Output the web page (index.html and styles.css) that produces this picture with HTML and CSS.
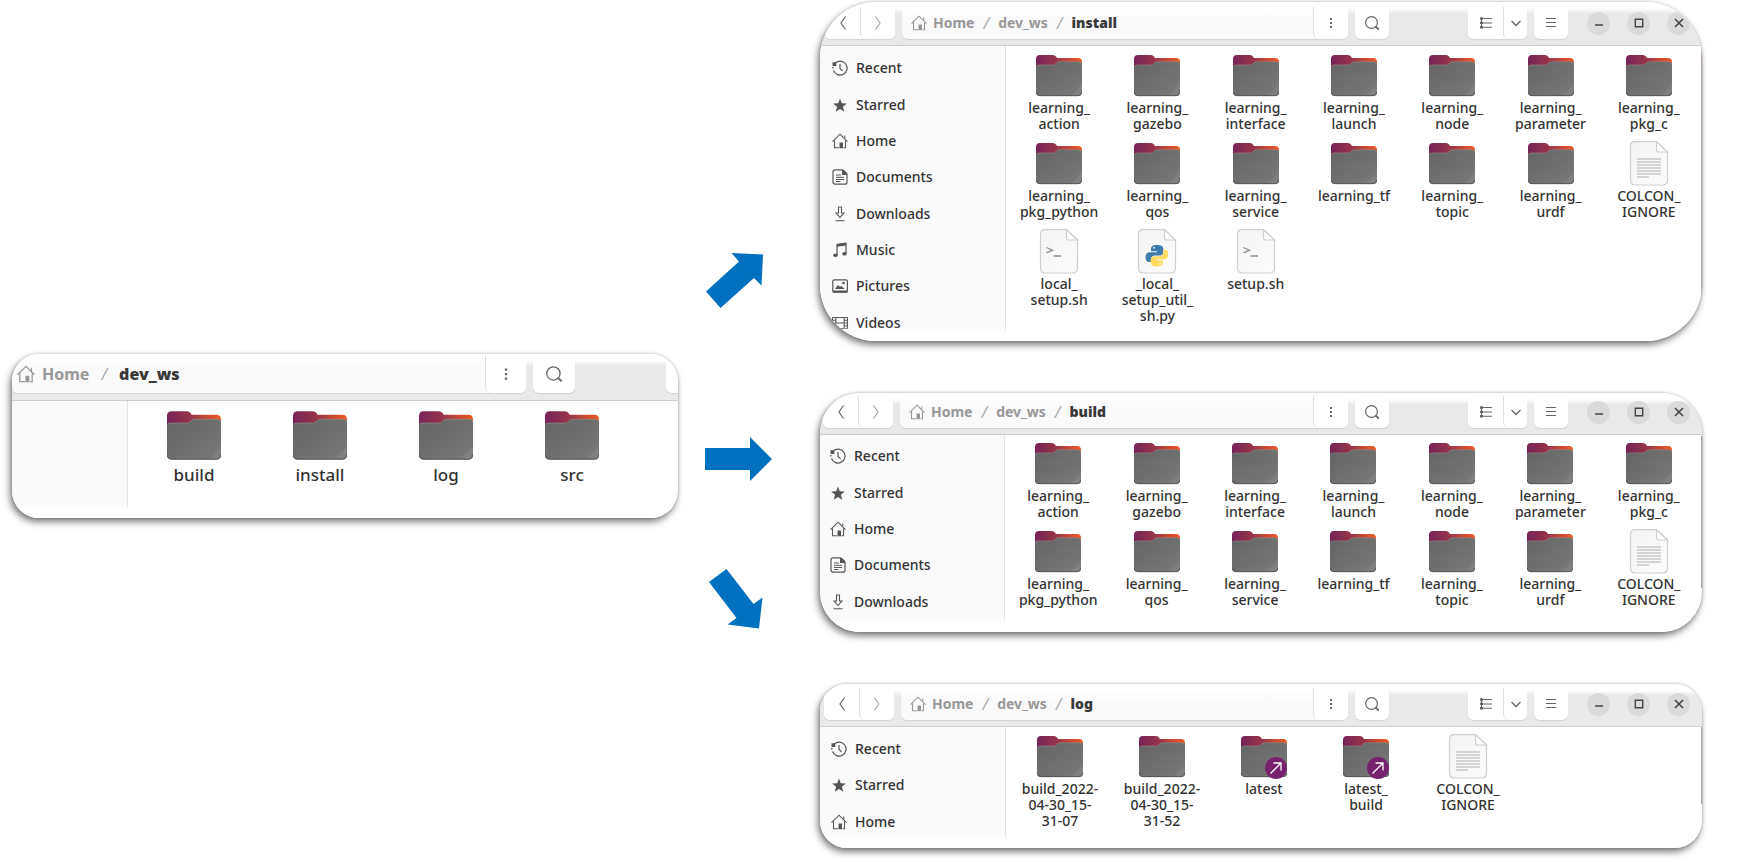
FILE: index.html
```html
<!DOCTYPE html>
<html lang="en">
<head>
<meta charset="utf-8">
<title>dev_ws workspace folders</title>
<link rel="stylesheet" href="styles.css">
</head>
<body>
<svg class="sprite" aria-hidden="true">
  <defs>
    <linearGradient id="tab" x1="0" y1="0" x2="1" y2="0"><stop offset="0" stop-color="#762358"/><stop offset=".45" stop-color="#97354a"/><stop offset=".75" stop-color="#cc4a35"/><stop offset="1" stop-color="#ee5a26"/></linearGradient>
    <linearGradient id="front" x1="0" y1="0" x2="1" y2="1"><stop offset="0" stop-color="#646464"/><stop offset="1" stop-color="#7a7a7a"/></linearGradient>
    <linearGradient id="paper" x1="0" y1="0" x2="1" y2="1"><stop offset="0" stop-color="#f4f4f4"/><stop offset="1" stop-color="#fcfcfc"/></linearGradient>
  </defs>
  <symbol id="folder" viewBox="0 0 46 46">
    <path d="M0 15V6q0-4 4-4h13q2 0 3 1.500l1 1.500h21q4 0 4 4v6z" fill="url(#tab)"/>
    <path d="M0 15q0-3 3-3h14q1.500 0 2.500-1l1.500-1.300q1-.9 2.500-.9H43q3 0 3 3V39q0 4-4 4H4q-4 0-4-4z" fill="url(#front)"/>
    <path d="M46 31v8q0 4-4 4h-7z" fill="#888" opacity=".5"/>
    <path d="M0 14q0-2 3-2h14q1.500 0 2.500-1l1.500-1.300q1-.9 2.500-.9H43q3 0 3 3" fill="none" stroke="#8d8582" stroke-width=".7"/>
    <path d="M.3 39q0 3.700 3.700 3.700h38q3.700 0 3.700-3.700" fill="none" stroke="#4e4e4e" stroke-width=".8"/>
  </symbol>
  <symbol id="page" viewBox="0 0 46 46">
    <path d="M9 .7h21.500L41.500 11v28q0 5-5 5h-27q-5 0-5-5V5.500Q4.500.7 9 .7z" fill="url(#paper)" stroke="#cfcfcf" stroke-width="1.200"/>
    <path d="M30.500.7v7.800q0 2.500 2.500 2.500h8.500z" fill="#fff" stroke="#cfcfcf" stroke-width="1.200"/>
  </symbol>
  <symbol id="text" viewBox="0 0 46 46">
    <use href="#page"/>
    <path d="M11 18h24M11 21h24M11 24h24M11 27h24M11 30h24M11 33h24M11 36h12" stroke="#b0b0b0" stroke-width="1.100"/>
  </symbol>
  <symbol id="shell" viewBox="0 0 46 46">
    <use href="#page"/>
    <path d="M10.500 18.500l6 2.700-6 2.700M17.500 27h7.500" fill="none" stroke="#8f8f8f" stroke-width="1.300"/>
  </symbol>
  <symbol id="python" viewBox="0 0 46 46">
    <use href="#page"/>
    <path d="M22.700 16c-4 0-5.700 1.400-5.700 3.700v2.500h6v1H15.500c-2.600 0-4 2.200-4 5.100s1.400 4.700 3.500 4.700h2v-2.700c0-2.300 1.700-3.800 4-3.800h5c2 0 3.300-1.400 3.300-3.300v-3.500c0-2.200-2-3.700-6.600-3.700z" fill="#3f7cad"/>
    <path d="M23.200 37.500c4 0 5.700-1.400 5.700-3.700v-2.500h-6v-1h7.500c2.600 0 3.900-2.200 3.900-5s-1.300-4.500-3.400-4.500h-1.600v2.500c0 2.400-1.600 3.900-4 3.900h-5c-2 0-3.600 1.400-3.600 3.200v3.400c0 2.200 2 3.700 6.500 3.700z" fill="#ffdc61"/>
    <circle cx="20" cy="18.800" r="1" fill="#dce9f3"/><circle cx="26" cy="34.700" r="1" fill="#fff8d8"/>
  </symbol>
  <symbol id="link" viewBox="0 0 46 46">
    <use href="#folder"/>
    <circle cx="35" cy="34" r="11" fill="#77216f"/>
    <path d="M29.500 39.500L40 29M32.500 29H40v7.500" fill="none" stroke="#fff" stroke-width="1.300"/>
  </symbol>
  <symbol id="recent" viewBox="0 0 16 16">
    <path d="M3.300 2.900A7 7 0 1 1 1.500 10.500" fill="none" stroke="currentColor" stroke-width="1.200"/>
    <path d="M.5 2.200h3.800v3.700H.5z" fill="currentColor"/><path d="M.8 7v1.500" stroke="currentColor" stroke-width="1.300"/>
    <path d="M8 4v4.500l2.500 2.300" fill="none" stroke="currentColor" stroke-width="1.200"/>
  </symbol>
  <symbol id="star" viewBox="0 0 16 16"><path d="M8 1.500l1.800 4.700 5 .3-3.900 3.200 1.400 5L8 12l-4.300 2.700 1.400-5-3.900-3.200 5-.3z" fill="currentColor"/></symbol>
  <symbol id="home" viewBox="0 0 16 16">
    <path d="M.5 8.700L8 1.200l7.500 7.500M2.500 7.500v7.300H7M13.500 7.500v7.300h-2" fill="none" stroke="currentColor" stroke-width="1.100"/>
    <path d="M7.500 9.500H11v5.800H7.500z" fill="currentColor"/><path d="M12.800 2.500v3" stroke="currentColor" stroke-width="1"/>
  </symbol>
  <symbol id="document" viewBox="0 0 16 16">
    <path d="M3 .8h7.500L15 5v8.200q0 2-2 2H3q-2 0-2-2V2.800q0-2 2-2z" fill="none" stroke="currentColor" stroke-width="1.200"/>
    <path d="M10 1h2l3 3v2h-5z" fill="currentColor"/><path d="M4 6h5M4 8.300h8M4 10.500h8M4 12.500h4.500" stroke="currentColor" stroke-width="1"/>
  </symbol>
  <symbol id="download" viewBox="0 0 16 16"><path d="M6.500 1h3v6H12l-4 4.500L4 7h2.500zM3.500 14.700h9" fill="none" stroke="currentColor" stroke-width="1.100"/></symbol>
  <symbol id="music" viewBox="0 0 16 16">
    <path d="M5 13V2.500l9-1.300v10.300" fill="none" stroke="currentColor" stroke-width="1.200"/><path d="M5 2l9-1.300v2.800L5 4.800z" fill="currentColor"/>
    <ellipse cx="3.500" cy="13.200" rx="2.300" ry="1.800" fill="currentColor"/><ellipse cx="12.500" cy="11.700" rx="2.300" ry="1.800" fill="currentColor"/>
  </symbol>
  <symbol id="picture" viewBox="0 0 16 16">
    <rect x=".8" y="1.800" width="14.600" height="12.400" rx="1.500" fill="none" stroke="currentColor" stroke-width="1.200"/><path d="M.8 13.500h14.600" stroke="currentColor" stroke-width="1.800"/>
    <path d="M3 11l3-4 2 2 1.300-1.300L12.500 11z" fill="currentColor"/><circle cx="11.500" cy="5" r="1.300" fill="currentColor"/>
  </symbol>
  <symbol id="video" viewBox="0 0 16 16">
    <path d="M3.800 2v12M12.200 2v12M15.400 2v12M.6 2v12M3.500 2.500h9M3.500 8h9M3.500 13.500h9" stroke="currentColor" stroke-width="1.100"/>
    <path d="M.6 2.500h3.200M.6 5.300h3.200M.6 8h3.200M.6 10.800h3.200M.6 13.500h3.200M12.200 2.500h3.200M12.200 5.300h3.200M12.200 8h3.200M12.200 10.800h3.200M12.200 13.500h3.200" stroke="currentColor" stroke-width=".9"/>
  </symbol>
  <symbol id="back" viewBox="0 0 16 16"><path d="M10.500 1.500L6 8l4.500 6.500" fill="none" stroke="currentColor" stroke-width="1.200"/></symbol>
  <symbol id="next" viewBox="0 0 16 16"><path d="M5.500 1.500L10 8l-4.500 6.500" fill="none" stroke="currentColor" stroke-width="1.200"/></symbol>
  <symbol id="dots" viewBox="0 0 16 16"><path d="M7 3h2v2H7zM7 7h2v2H7zM7 11h2v2H7z" fill="currentColor"/></symbol>
  <symbol id="search" viewBox="0 0 16 16"><circle cx="7.500" cy="7.500" r="5.900" fill="none" stroke="currentColor" stroke-width="1.200"/><path d="M11.500 11.500l3.300 3" stroke="currentColor" stroke-width="1.700"/></symbol>
  <symbol id="list" viewBox="0 0 16 16"><path d="M2 2.500h3v2.300H2zM2 6.800h3v2.300H2zM2 11.100h3v2.300H2z" fill="currentColor"/><path d="M3.500 2v11M5 3.500h9M5 8h9M5 12.300h9" stroke="currentColor" stroke-width="1.100"/></symbol>
  <symbol id="chevron" viewBox="0 0 16 16"><path d="M3.500 6L8 10.500 12.500 6" fill="none" stroke="currentColor" stroke-width="1.300"/></symbol>
  <symbol id="menu" viewBox="0 0 16 16"><path d="M3 3.500h10M3 7.500h10M3 11.500h10" stroke="currentColor" stroke-width="1.100"/></symbol>
  <symbol id="minimize" viewBox="0 0 16 16"><path d="M4 10h8" stroke="currentColor" stroke-width="1.300"/></symbol>
  <symbol id="maximize" viewBox="0 0 16 16"><path d="M4.300 4.300h7.400v7.400H4.300z" fill="none" stroke="currentColor" stroke-width="1.400"/></symbol>
  <symbol id="close" viewBox="0 0 16 16"><path d="M4 4l8 8M12 4l-8 8" stroke="currentColor" stroke-width="1.600"/></symbol>
</svg>

<main class="diagram">
  <section class="window window-source">
    <header class="bar">
      <div class="group path">
        <nav class="crumbs"><a href="#"><svg><use href="#home"/></svg>Home</a><i>/</i><b>dev_ws</b></nav>
        <button aria-label="Options"><svg><use href="#dots"/></svg></button>
      </div>
      <button class="solo" aria-label="Search"><svg><use href="#search"/></svg></button>
      <span class="space"></span>
      <button class="solo cut" aria-label="View"></button>
    </header>
    <div class="body">
      <aside class="places"></aside>
      <ul class="files">
        <li><svg><use href="#folder"/></svg>build</li>
        <li><svg><use href="#folder"/></svg>install</li>
        <li><svg><use href="#folder"/></svg>log</li>
        <li><svg><use href="#folder"/></svg>src</li>
      </ul>
    </div>
  </section>

  <div class="arrows" aria-hidden="true">
    <svg class="arrow-up" viewBox="705 253 68 56"><path d="M706 291.500L739 261.500 731.500 253 763 254.500 761.500 285.500 754 278 720.500 308z"/></svg>
    <svg class="arrow-mid" viewBox="705 437 68 44"><path d="M705 448h45v-11l22 22-22 22v-11h-45z"/></svg>
    <svg class="arrow-down" viewBox="705 569 68 60"><path d="M709 582l17.500-13 27 35 9-6.500-3.500 31-31.500-4 9-6.500z"/></svg>
  </div>

  <div class="results">
    <section class="window window-install">
      <header class="bar">
        <div class="group"><button aria-label="Back"><svg><use href="#back"/></svg></button><button class="faint" aria-label="Forward"><svg><use href="#next"/></svg></button></div>
        <div class="group path">
          <nav class="crumbs"><a href="#"><svg><use href="#home"/></svg>Home</a><i>/</i><a href="#">dev_ws</a><i>/</i><b>install</b></nav>
          <button aria-label="Options"><svg><use href="#dots"/></svg></button>
        </div>
        <button class="solo" aria-label="Search"><svg><use href="#search"/></svg></button>
        <span class="space"></span>
        <div class="group"><button aria-label="List view"><svg><use href="#list"/></svg></button><button class="narrow" aria-label="View options"><svg><use href="#chevron"/></svg></button></div>
        <button class="solo" aria-label="Menu"><svg><use href="#menu"/></svg></button>
        <div class="controls"><button aria-label="Minimize"><svg><use href="#minimize"/></svg></button><button aria-label="Maximize"><svg><use href="#maximize"/></svg></button><button aria-label="Close"><svg><use href="#close"/></svg></button></div>
      </header>
      <div class="body">
        <aside class="places">
          <a href="#"><svg><use href="#recent"/></svg>Recent</a>
          <a href="#"><svg><use href="#star"/></svg>Starred</a>
          <a href="#"><svg><use href="#home"/></svg>Home</a>
          <a href="#"><svg><use href="#document"/></svg>Documents</a>
          <a href="#"><svg><use href="#download"/></svg>Downloads</a>
          <a href="#"><svg><use href="#music"/></svg>Music</a>
          <a href="#"><svg><use href="#picture"/></svg>Pictures</a>
          <a href="#"><svg><use href="#video"/></svg>Videos</a>
        </aside>
        <ul class="files">
          <li><svg><use href="#folder"/></svg>learning_<br>action</li>
          <li><svg><use href="#folder"/></svg>learning_<br>gazebo</li>
          <li><svg><use href="#folder"/></svg>learning_<br>interface</li>
          <li><svg><use href="#folder"/></svg>learning_<br>launch</li>
          <li><svg><use href="#folder"/></svg>learning_<br>node</li>
          <li><svg><use href="#folder"/></svg>learning_<br>parameter</li>
          <li><svg><use href="#folder"/></svg>learning_<br>pkg_c</li>
          <li><svg><use href="#folder"/></svg>learning_<br>pkg_python</li>
          <li><svg><use href="#folder"/></svg>learning_<br>qos</li>
          <li><svg><use href="#folder"/></svg>learning_<br>service</li>
          <li><svg><use href="#folder"/></svg>learning_tf</li>
          <li><svg><use href="#folder"/></svg>learning_<br>topic</li>
          <li><svg><use href="#folder"/></svg>learning_<br>urdf</li>
          <li><svg><use href="#text"/></svg>COLCON_<br>IGNORE</li>
          <li><svg><use href="#shell"/></svg>local_<br>setup.sh</li>
          <li><svg><use href="#python"/></svg>_local_<br>setup_util_<br>sh.py</li>
          <li><svg><use href="#shell"/></svg>setup.sh</li>
        </ul>
      </div>
    </section>

    <section class="window window-build">
      <header class="bar">
        <div class="group"><button aria-label="Back"><svg><use href="#back"/></svg></button><button class="faint" aria-label="Forward"><svg><use href="#next"/></svg></button></div>
        <div class="group path">
          <nav class="crumbs"><a href="#"><svg><use href="#home"/></svg>Home</a><i>/</i><a href="#">dev_ws</a><i>/</i><b>build</b></nav>
          <button aria-label="Options"><svg><use href="#dots"/></svg></button>
        </div>
        <button class="solo" aria-label="Search"><svg><use href="#search"/></svg></button>
        <span class="space"></span>
        <div class="group"><button aria-label="List view"><svg><use href="#list"/></svg></button><button class="narrow" aria-label="View options"><svg><use href="#chevron"/></svg></button></div>
        <button class="solo" aria-label="Menu"><svg><use href="#menu"/></svg></button>
        <div class="controls"><button aria-label="Minimize"><svg><use href="#minimize"/></svg></button><button aria-label="Maximize"><svg><use href="#maximize"/></svg></button><button aria-label="Close"><svg><use href="#close"/></svg></button></div>
      </header>
      <div class="body">
        <aside class="places">
          <a href="#"><svg><use href="#recent"/></svg>Recent</a>
          <a href="#"><svg><use href="#star"/></svg>Starred</a>
          <a href="#"><svg><use href="#home"/></svg>Home</a>
          <a href="#"><svg><use href="#document"/></svg>Documents</a>
          <a href="#"><svg><use href="#download"/></svg>Downloads</a>
        </aside>
        <ul class="files">
          <li><svg><use href="#folder"/></svg>learning_<br>action</li>
          <li><svg><use href="#folder"/></svg>learning_<br>gazebo</li>
          <li><svg><use href="#folder"/></svg>learning_<br>interface</li>
          <li><svg><use href="#folder"/></svg>learning_<br>launch</li>
          <li><svg><use href="#folder"/></svg>learning_<br>node</li>
          <li><svg><use href="#folder"/></svg>learning_<br>parameter</li>
          <li><svg><use href="#folder"/></svg>learning_<br>pkg_c</li>
          <li><svg><use href="#folder"/></svg>learning_<br>pkg_python</li>
          <li><svg><use href="#folder"/></svg>learning_<br>qos</li>
          <li><svg><use href="#folder"/></svg>learning_<br>service</li>
          <li><svg><use href="#folder"/></svg>learning_tf</li>
          <li><svg><use href="#folder"/></svg>learning_<br>topic</li>
          <li><svg><use href="#folder"/></svg>learning_<br>urdf</li>
          <li><svg><use href="#text"/></svg>COLCON_<br>IGNORE</li>
        </ul>
      </div>
    </section>

    <section class="window window-log">
      <header class="bar">
        <div class="group"><button aria-label="Back"><svg><use href="#back"/></svg></button><button class="faint" aria-label="Forward"><svg><use href="#next"/></svg></button></div>
        <div class="group path">
          <nav class="crumbs"><a href="#"><svg><use href="#home"/></svg>Home</a><i>/</i><a href="#">dev_ws</a><i>/</i><b>log</b></nav>
          <button aria-label="Options"><svg><use href="#dots"/></svg></button>
        </div>
        <button class="solo" aria-label="Search"><svg><use href="#search"/></svg></button>
        <span class="space"></span>
        <div class="group"><button aria-label="List view"><svg><use href="#list"/></svg></button><button class="narrow" aria-label="View options"><svg><use href="#chevron"/></svg></button></div>
        <button class="solo" aria-label="Menu"><svg><use href="#menu"/></svg></button>
        <div class="controls"><button aria-label="Minimize"><svg><use href="#minimize"/></svg></button><button aria-label="Maximize"><svg><use href="#maximize"/></svg></button><button aria-label="Close"><svg><use href="#close"/></svg></button></div>
      </header>
      <div class="body">
        <aside class="places">
          <a href="#"><svg><use href="#recent"/></svg>Recent</a>
          <a href="#"><svg><use href="#star"/></svg>Starred</a>
          <a href="#"><svg><use href="#home"/></svg>Home</a>
        </aside>
        <ul class="files">
          <li><svg><use href="#folder"/></svg>build_2022-<br>04-30_15-<br>31-07</li>
          <li><svg><use href="#folder"/></svg>build_2022-<br>04-30_15-<br>31-52</li>
          <li><svg><use href="#link"/></svg>latest</li>
          <li><svg><use href="#link"/></svg>latest_<br>build</li>
          <li><svg><use href="#text"/></svg>COLCON_<br>IGNORE</li>
        </ul>
      </div>
    </section>
  </div>
</main>
</body>
</html>
```

FILE: styles.css
```css
* { box-sizing: border-box; }

body {
  margin: 0;
  background: #fff;
  color: #333;
  font: 500 14px/16px "Noto Sans", "Open Sans", sans-serif;
}

a { color: inherit; text-decoration: none; }

button {
  display: flex;
  align-items: center;
  justify-content: center;
  width: 34px;
  padding: 0;
  border: 0;
  background: #fff;
  color: #666;
  font: inherit;
}

svg { flex: none; width: 16px; height: 16px; }

.sprite { position: absolute; width: 0; height: 0; }

.diagram {
  display: grid;
  grid-template-columns: 666fr 142px 882fr;
  padding: 2px 35px 13px 12px;
}

.results { display: flex; flex-direction: column; gap: 52px; }

.window {
  position: relative;
  overflow: hidden;
  background: #fff;
  box-shadow: -2px 4px 7px rgba(0, 0, 0, .5), 0 0 3px rgba(0, 0, 0, .25);
}

.window::after {
  content: "";
  position: absolute;
  inset: auto 0 0;
  height: 14px;
  background: linear-gradient(transparent, #fff 6px);
}

.results .window::before {
  content: "";
  position: absolute;
  top: 43px;
  right: 0;
  bottom: 44px;
  width: 1px;
  background: #b09aa8;
}

/* header bar */

.bar {
  display: flex;
  gap: 7px;
  padding: 5px 12px 6px 5px;
  border-bottom: 1px solid #cecece;
  background: linear-gradient(#fff 6px, #e9e9e9 12px);
}

.group, .solo {
  height: 32px;
  border-radius: 0 0 6px 6px;
  box-shadow: 0 1px 1px #d2d2d2;
}

.group { display: flex; background: #fff; }
.group button { width: 35px; border-radius: 0 0 6px 6px; }
.group button + button, .path button { border-left: 1px solid #dedede; }
.group .narrow { width: 24px; }
.group .faint { color: #ababab; }
.path { flex: 1; background: linear-gradient(#fff, #fafafa 14px); }

.crumbs {
  display: flex;
  flex: 1;
  align-items: center;
  gap: 9px;
  padding-left: 9px;
  color: #989898;
  font-weight: 700;
}

.crumbs a { display: flex; align-items: center; gap: 6px; }
.crumbs i { color: #aaa; font-size: 16px; font-weight: 400; }
.crumbs b { color: #383838; }

.space { width: 65px; }

.controls { display: flex; align-items: center; gap: 17px; margin-left: 12px; }
.controls button { width: 23px; height: 23px; border-radius: 50%; background: #dadada; color: #444; }

/* sidebar and file grid */

.body { display: flex; }

.places {
  display: flex;
  flex: none;
  flex-direction: column;
  width: 186px;
  padding-top: 4px;
  border-right: 1px solid #e2e2e2;
  background: #fafafa;
}

.places a {
  display: flex;
  flex: 1;
  align-items: center;
  gap: 8px;
  min-height: 36px;
  padding-left: 12px;
}

.places svg { color: #555; }

.files {
  display: grid;
  flex: 1;
  grid-template-columns: repeat(7, 1fr);
  row-gap: 9px;
  align-content: start;
  margin: 0;
  padding: 7px 4px 17px;
  list-style: none;
}

.files li {
  display: flow-root;
  text-align: center;
  white-space: nowrap;
}

.files svg { display: block; width: 46px; height: 46px; margin: 0 auto 1px; }

/* per-window settings */

.window-install { border-radius: 56px; }

.window-build { border-radius: 40px; }
.window-build .bar { padding-top: 3px; padding-left: 3px; }
.window-build .places { width: 185px; padding: 3px 0 12px; }
.window-build .places a { padding-left: 10px; }
.window-build .files { padding: 6px 4px 24px; }

.window-log { border-radius: 27px; }
.window-log .bar { padding-top: 4px; padding-left: 4px; }
.window-log .places { width: 186px; padding-bottom: 8px; }
.window-log .places a { padding-left: 11px; }
.window-log .files { grid-template-columns: repeat(5, 102px); padding: 7px 3px 19px; }

.window-source {
  align-self: start;
  margin-top: 352px;
  border-radius: 27px;
}

.window-source .bar { padding: 1px 0 7px; background: linear-gradient(#fff 7px, #e9e9e9 12px); }
.window-source .group, .window-source .solo { height: 38px; }
.window-source .group button { width: 41px; }
.window-source .solo { width: 42px; }
.window-source .bar svg { width: 18px; height: 18px; }
.window-source .crumbs { gap: 12px; padding-left: 5px; font-size: 16px; }
.window-source .crumbs a { gap: 7px; }
.window-source .space { width: 77px; }
.window-source .bar .cut { width: 12px; border-radius: 0 0 0 6px; }
.window-source .places { width: 116px; }
.window-source .files {
  grid-template-columns: repeat(4, 126px);
  padding: 8px 3px 33px;
  font-size: 17px;
  line-height: 20px;
}
.window-source .files svg { width: 54px; height: 54px; margin-bottom: 2px; }

/* arrows */

.arrows { display: flex; flex-direction: column; padding: 251px 0 0 27px; }
.arrows svg { width: 68px; fill: #0070c0; }
.arrows .arrow-up { height: 56px; }
.arrows .arrow-mid { height: 44px; margin: 128px 0 88px; }
.arrows .arrow-down { height: 60px; }
```
